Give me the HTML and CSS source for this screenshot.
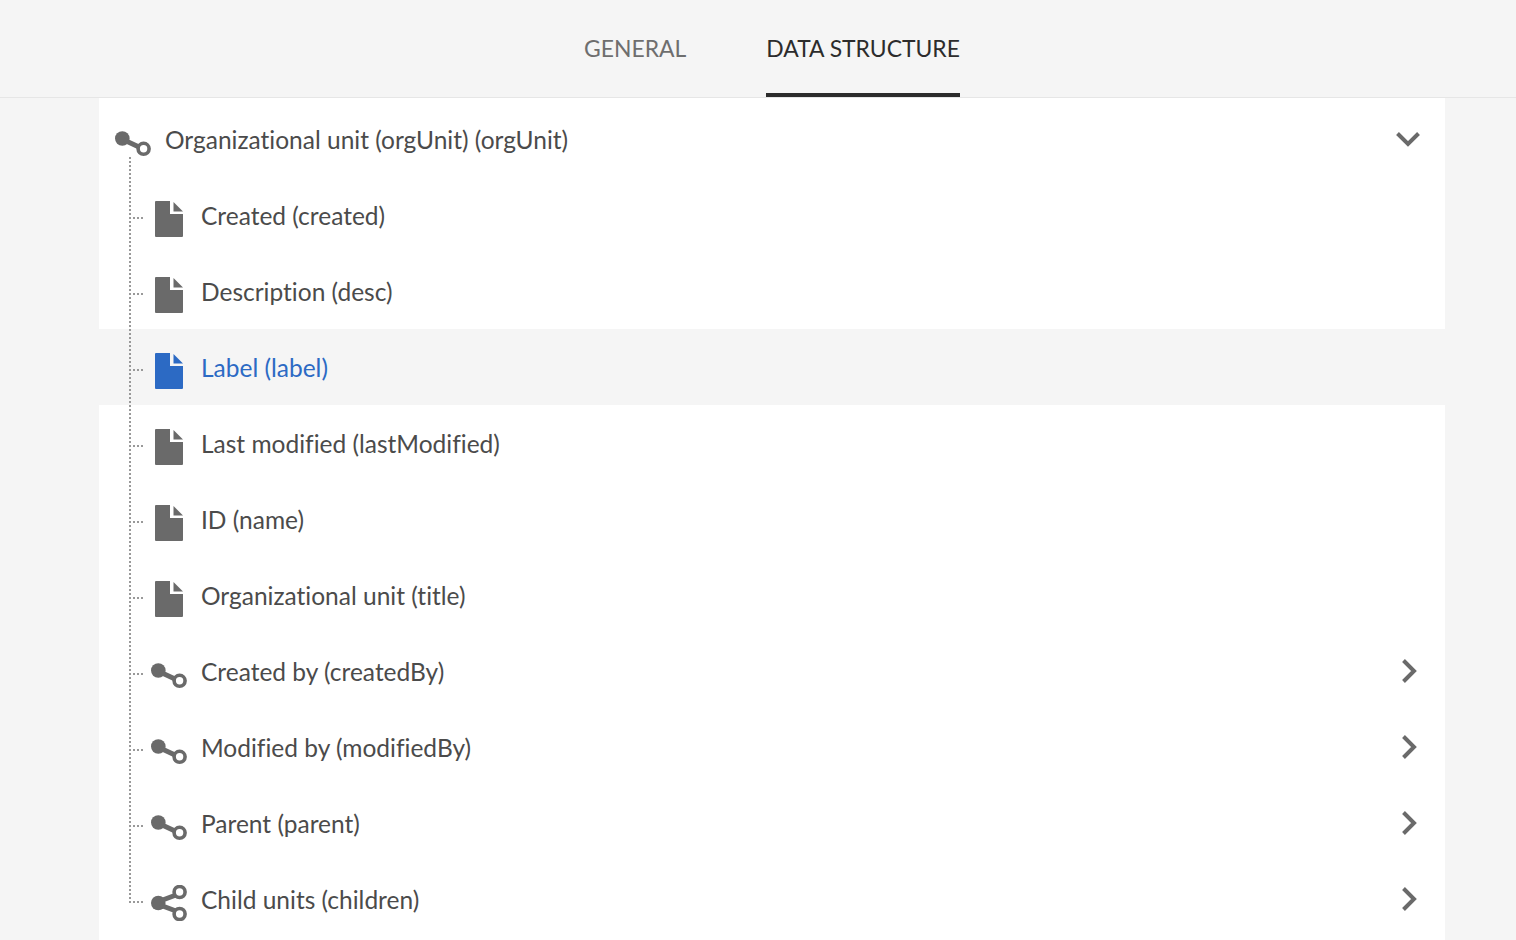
FILE: index.html
```html
<!DOCTYPE html>
<html>
<head>
    <meta charset="UTF-8">
    <title>Data structure</title>
    <link rel="stylesheet" href="styles.css">
</head>
<body>
    <svg class="defs" width="0" height="0">
        <symbol id="i-file" viewBox="0 0 36 36">
            <path d="M5 0H19V13H32V35A1 1 0 0 1 31 36H5A1 1 0 0 1 4 35V1A1 1 0 0 1 5 0Z"/>
            <path d="M22.5 1L32 10.5H22.5Z"/>
        </symbol>
        <symbol id="i-link" viewBox="0 0 36 36">
            <circle cx="7.3" cy="13.5" r="7.3"/>
            <path class="ln" d="M9 15L24 22"/>
            <circle class="ring" cx="28.6" cy="23.8" r="5.5"/>
        </symbol>
        <symbol id="i-share" viewBox="0 0 36 36">
            <circle cx="7.3" cy="18" r="7.3"/>
            <path class="ln" d="M9 16L25 10M9 20L25 26"/>
            <circle class="ring" cx="28.6" cy="7" r="5.5"/>
            <circle class="ring" cx="28.6" cy="29" r="5.5"/>
        </symbol>
    </svg>

    <div class="tabs">
        <a class="tab">GENERAL</a>
        <a class="tab active">DATA STRUCTURE</a>
    </div>

    <div class="panel">
        <div class="row head">
            <svg class="icon"><use href="#i-link"/></svg>
            <span class="label">Organizational unit (orgUnit) (orgUnit)</span>
            <svg class="chev down" viewBox="0 0 26 16"><path d="M2.5 2.5L13 13L23.5 2.5"/></svg>
        </div>
        <div class="tree">
            <div class="row">
                <svg class="icon"><use href="#i-file"/></svg>
                <span class="label">Created (created)</span>
            </div>
            <div class="row">
                <svg class="icon"><use href="#i-file"/></svg>
                <span class="label">Description (desc)</span>
            </div>
            <div class="row selected">
                <svg class="icon"><use href="#i-file"/></svg>
                <span class="label">Label (label)</span>
            </div>
            <div class="row">
                <svg class="icon"><use href="#i-file"/></svg>
                <span class="label">Last modified (lastModified)</span>
            </div>
            <div class="row">
                <svg class="icon"><use href="#i-file"/></svg>
                <span class="label">ID (name)</span>
            </div>
            <div class="row">
                <svg class="icon"><use href="#i-file"/></svg>
                <span class="label">Organizational unit (title)</span>
            </div>
            <div class="row">
                <svg class="icon"><use href="#i-link"/></svg>
                <span class="label">Created by (createdBy)</span>
                <svg class="chev right" viewBox="0 0 16 26"><path d="M2.5 2.5L13 13L2.5 23.5"/></svg>
            </div>
            <div class="row">
                <svg class="icon"><use href="#i-link"/></svg>
                <span class="label">Modified by (modifiedBy)</span>
                <svg class="chev right" viewBox="0 0 16 26"><path d="M2.5 2.5L13 13L2.5 23.5"/></svg>
            </div>
            <div class="row">
                <svg class="icon"><use href="#i-link"/></svg>
                <span class="label">Parent (parent)</span>
                <svg class="chev right" viewBox="0 0 16 26"><path d="M2.5 2.5L13 13L2.5 23.5"/></svg>
            </div>
            <div class="row last">
                <svg class="icon"><use href="#i-share"/></svg>
                <span class="label">Child units (children)</span>
                <svg class="chev right" viewBox="0 0 16 26"><path d="M2.5 2.5L13 13L2.5 23.5"/></svg>
            </div>
        </div>
    </div>
</body>
</html>
```

FILE: styles.css
```css
html, body {
    margin: 0;
    height: 100%;
    overflow: hidden;
}
body {
    background-color: #f5f5f5;
    font-family: 'Lato', 'Noto Sans', sans-serif;
    font-size: 24.5px;
    font-variant-ligatures: none;
    color: #4b4b4b;
}
.defs {
    position: absolute;
}
.tabs {
    display: flex;
    justify-content: center;
    gap: 80px;
    height: 97px;
    padding-left: 28px;
    border-bottom: 1px solid #e6e6e6;
    font-size: 22.9px;
}
.tab {
    height: 93px;
    line-height: 97px;
    color: #6e6e6e;
}
.tab.active {
    color: #2c2c2c;
    border-bottom: 4px solid #2c2c2c;
}
.panel {
    margin: 0 71px 0 99px;
    height: 842px;
    background-color: #fff;
    padding-top: 3px;
    box-sizing: border-box;
}
.row {
    display: flex;
    align-items: center;
    height: 76px;
    padding-left: 52px;
    padding-right: 28px;
    position: relative;
}
.row.head {
    padding-left: 16px;
    padding-right: 24px;
}
.icon {
    width: 36px;
    height: 36px;
    flex: none;
    margin-right: 14px;
    margin-top: 8px;
    fill: #6a6a6a;
    stroke: #6a6a6a;
    stroke-width: 0;
}
.ln {
    stroke-width: 5;
}
.ring {
    fill: none;
    stroke-width: 3.6;
}
.label {
    flex: 1;
}
.chev {
    flex: none;
    fill: none;
    stroke: #6a6a6a;
    stroke-width: 4;
}
.chev.down {
    width: 26px;
    height: 16px;
}
.chev.right {
    width: 16px;
    height: 26px;
}
.row.selected {
    background-color: #f5f5f5;
    color: #2c6ac4;
}
.row.selected .icon {
    fill: #2c6ac4;
    stroke: #2c6ac4;
}
.tree {
    position: relative;
}
/* dotted connector lines */
.tree::before {
    content: "";
    position: absolute;
    z-index: 1;
    left: 30px;
    top: -20px;
    height: 746px;
    width: 2px;
    background: repeating-linear-gradient(to bottom, #999 0, #999 2px, transparent 2px, transparent 4px);
}
.row:not(.head)::before {
    content: "";
    position: absolute;
    left: 34px;
    top: 40px;
    width: 10px;
    height: 2px;
    background: repeating-linear-gradient(to right, #999 0, #999 2px, transparent 2px, transparent 4px);
}
.row.last::before {
    left: 30px;
    width: 14px;
}
```
